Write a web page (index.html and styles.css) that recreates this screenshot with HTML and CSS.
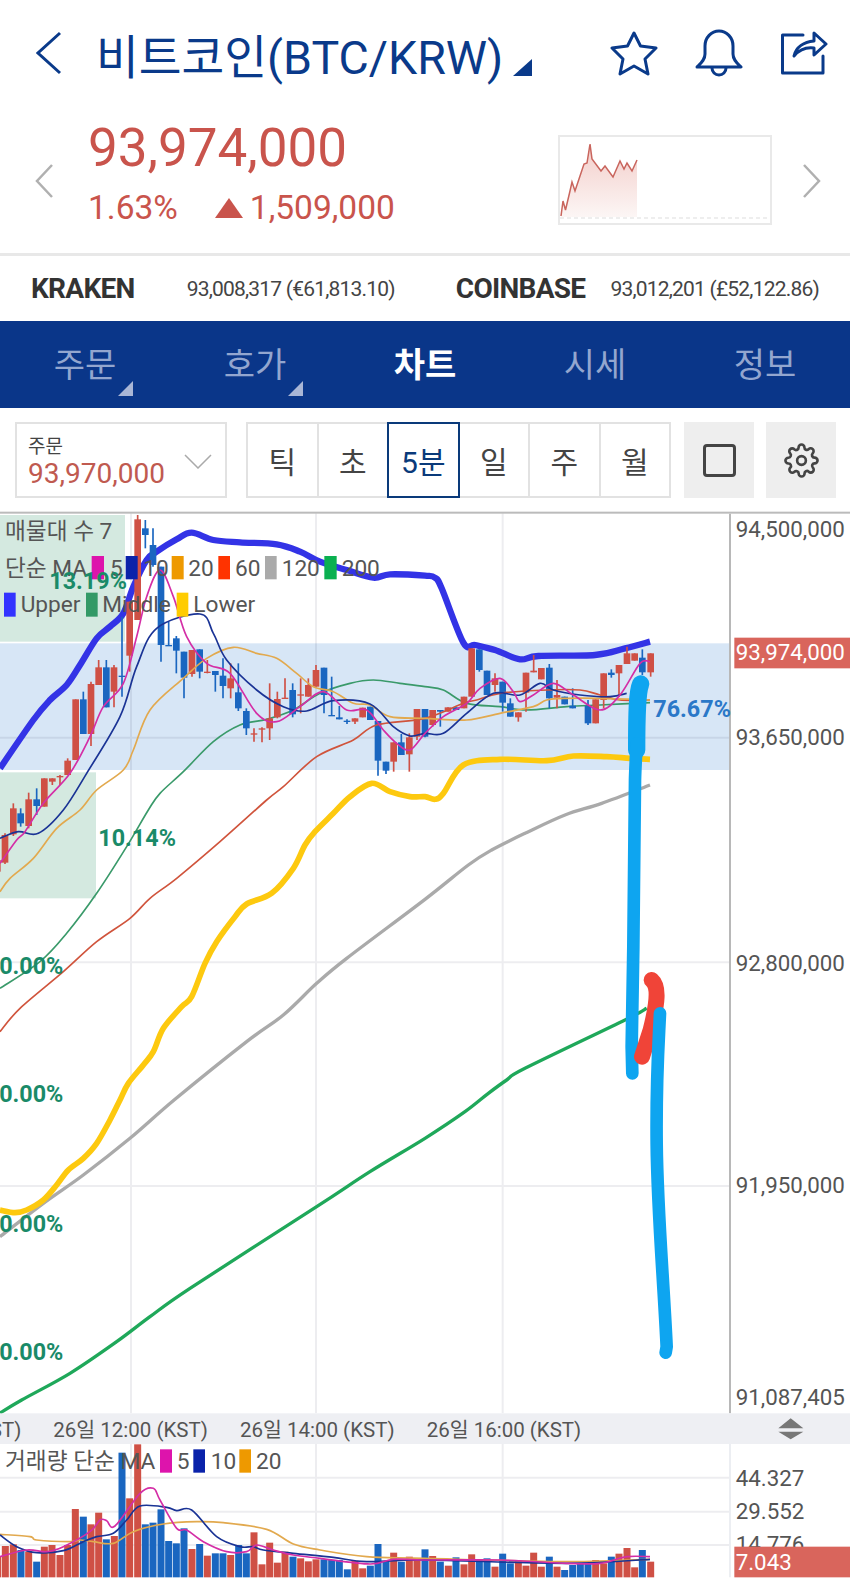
FILE: index.html
```html
<!DOCTYPE html>
<html lang="ko">
<head>
  <meta charset="UTF-8" />
  <meta name="viewport" content="width=device-width, initial-scale=1" />
  <title>비트코인(BTC/KRW)</title>
  <link rel="stylesheet" href="styles.css">
</head>
<body>
  <header class="title-bar">
    <svg class="icon-back" viewBox="0 0 26 44"><path d="M24 2 L2 22 L24 42" /></svg>
    <h1 class="title">비트코인(BTC/KRW)</h1>
    <span class="corner-title"></span>
    <svg class="icon icon-star" viewBox="0 0 48 46"><path d="M24 3 L30.5 16 L46 18 L35 29 L38 44 L24 36 L10 44 L13 29 L2 18 L17.5 16 Z" /></svg>
    <svg class="icon icon-bell" viewBox="0 0 48 48"><path d="M2 38 C6 34 10 31 10 25 V17 A14 15 0 0 1 38 17 V25 C38 31 42 34 46 38 Z" /><path d="M17 39 A7 7 0 0 0 31 39" /></svg>
    <svg class="icon icon-share" viewBox="0 0 47 44"><path d="M22 4 H1.5 V42 H42 V25" /><path d="M13 25 C15 16 23 11 33 10 V2 L45 13 L33 24 V17 C25 16 18 19 13 25 Z" /></svg>
  </header>

  <section class="price-row">
    <svg class="icon-step" viewBox="0 0 18 34"><path d="M17 1 L2 17 L17 33" /></svg>
    <div class="price-info">
      <div class="price-now">93,974,000</div>
      <div class="price-change">
        <span class="change-rate">1.63%</span>
        <span class="change-arrow"></span>
        <span>1,509,000</span>
      </div>
    </div>
    <div class="spark">
      <svg viewBox="0 0 210 85">
        <defs>
          <linearGradient id="sparkFill" x1="0" y1="0" x2="0" y2="1">
            <stop offset="0" stop-color="#f3cdc9" />
            <stop offset="1" stop-color="#fcf6f5" />
          </linearGradient>
        </defs>
        <path class="spark-area" d="M1 79 L3 64 L5.500 73 L10 54 L12 45 L15 54 L19 42 L24 27 L27 26 L30 7 L32 22 L41 34 L45 29 L53 40 L60 24 L64 32 L67 26 L72 34 L77 23 V80 H1 Z" />
        <path class="spark-line" d="M1 79 L3 64 L5.500 73 L10 54 L12 45 L15 54 L19 42 L24 27 L27 26 L30 7 L32 22 L41 34 L45 29 L53 40 L60 24 L64 32 L67 26 L72 34 L77 23" />
        <path class="spark-base" d="M0 81 H208" />
      </svg>
    </div>
    <svg class="icon-step icon-next" viewBox="0 0 18 34"><path d="M1 1 L16 17 L1 33" /></svg>
  </section>

  <section class="exchange-row">
    <span class="exchange-name name-kraken">KRAKEN</span>
    <span class="exchange-price price-kraken">93,008,317 (€61,813.10)</span>
    <span class="exchange-name name-coinbase">COINBASE</span>
    <span class="exchange-price price-coinbase">93,012,201 (£52,122.86)</span>
  </section>

  <nav class="tabs">
    <a class="tab has-menu">주문</a>
    <a class="tab has-menu">호가</a>
    <a class="tab active">차트</a>
    <a class="tab">시세</a>
    <a class="tab">정보</a>
  </nav>

  <section class="toolbar">
    <div class="order-select">
      <div>
        <div class="order-label">주문</div>
        <div class="order-price">93,970,000</div>
      </div>
      <svg class="icon-down" viewBox="0 0 28 15"><path d="M1 1 L14 14 L27 1" /></svg>
    </div>
    <div class="periods">
      <button class="period">틱</button>
      <button class="period">초</button>
      <button class="period selected">5분</button>
      <button class="period">일</button>
      <button class="period">주</button>
      <button class="period">월</button>
    </div>
    <button class="tool"><span class="tool-square"></span></button>
    <button class="tool">
      <svg class="icon-gear" viewBox="0 0 24 24">
        <circle cx="12" cy="12" r="3" />
        <path d="M19.4 15a1.65 1.65 0 0 0 .33 1.82l.06.06a2 2 0 0 1 0 2.83 2 2 0 0 1-2.83 0l-.06-.06a1.65 1.65 0 0 0-1.82-.33 1.65 1.65 0 0 0-1 1.51V21a2 2 0 0 1-2 2 2 2 0 0 1-2-2v-.09A1.65 1.65 0 0 0 9 19.4a1.65 1.65 0 0 0-1.82.33l-.06.06a2 2 0 0 1-2.83 0 2 2 0 0 1 0-2.83l.06-.06a1.65 1.65 0 0 0 .33-1.82 1.65 1.65 0 0 0-1.51-1H3a2 2 0 0 1-2-2 2 2 0 0 1 2-2h.09A1.65 1.65 0 0 0 4.6 9a1.65 1.65 0 0 0-.33-1.82l-.06-.06a2 2 0 0 1 0-2.83 2 2 0 0 1 2.83 0l.06.06a1.65 1.65 0 0 0 1.82.33H9a1.65 1.65 0 0 0 1-1.51V3a2 2 0 0 1 2-2 2 2 0 0 1 2 2v.09a1.65 1.65 0 0 0 1 1.51 1.65 1.65 0 0 0 1.82-.33l.06-.06a2 2 0 0 1 2.83 0 2 2 0 0 1 0 2.83l-.06.06a1.65 1.65 0 0 0-.33 1.82V9a1.65 1.65 0 0 0 1.51 1H21a2 2 0 0 1 2 2 2 2 0 0 1-2 2h-.09a1.65 1.65 0 0 0-1.51 1z" />
      </svg>
    </button>
  </section>

  <!-- chart is drawn in 3x units, 1px on screen = 3 units -->
  <svg class="chart" viewBox="0 0 2550 3216">
    <rect class="chart-top" x="0" y="5" width="2550" height="6" />
    <rect class="zone-green" x="0" y="15" width="375" height="380" />
    <rect class="zone-green" x="0" y="787" width="288" height="378" />
    <rect class="zone-blue" x="0" y="400" width="2190" height="380" />

    <path class="grid" d="M393 11 V2710 M948 11 V2710 M1508 11 V2710 M0 683 H2190 M0 1357 H2190 M0 2028 H2190" />
    <path class="grid" d="M393 2802 V3202 M948 2802 V3202 M1508 2802 V3202 M0 2903 H2190 M0 3005 H2190 M0 3105 H2190" />
    <path class="axis-line" d="M2190 11 V2710" />
    <path class="axis-line-light" d="M2190 2802 V3202" />

    <polyline class="ma-200" points="0,2709 65,2670 210,2590 350,2495 450,2420 570,2335 950,2090 1110,1985 1275,1885 1395,1805 1465,1750 1520,1710 1575,1675 1875,1530 1940,1495" />
    <polyline class="ma-120" points="0,2180 130,2080 250,1995 390,1885 525,1768 740,1595 850,1515 950,1420 1040,1345 1275,1168 1405,1065 1475,1020 1575,970 1695,915 1805,880 1950,825" />
    <polyline class="band-lower" points="0,2100 45,2108 80,2100 130,2070 170,2025 205,1980 250,1945 290,1900 330,1830 360,1770 385,1720 430,1665 460,1625 490,1555 545,1490 575,1460 615,1360 650,1295 705,1220 740,1182 815,1150 880,1075 915,1005 945,965 1000,910 1050,860 1115,820 1170,845 1230,860 1275,860 1305,868 1330,850 1390,765 1500,748 1640,752 1720,738 1820,740 1890,745 1950,748" />
    <polyline class="band-upper" points="0,775 100,630 150,570 200,525 240,465 290,385 330,350 370,310 400,230 440,150 470,125 530,88 575,68 640,90 720,97 830,103 900,125 960,155 1040,180 1120,203 1170,193 1275,197 1305,203 1325,235 1390,398 1425,405 1485,420 1560,448 1615,438 1785,435 1875,415 1950,395" />
    <polyline class="band-middle" points="0,1435 120,1355 200,1270 290,1150 380,1010 445,900 480,850 550,785 640,695 720,645 800,628 880,600 960,550 1050,520 1120,510 1200,520 1275,530 1330,540 1400,580 1500,590 1580,600 1700,590 1800,585 1950,578" />

    <g id="candles"></g>

    <polyline class="ma-60" points="0,1565 60,1495 190,1385 290,1295 390,1225 450,1165 530,1105 660,995 800,870 850,830 950,740 1060,690 1130,645 1275,625 1390,580 1430,570 1500,550 1640,540 1740,540 1800,555 1860,570 1950,570" />
    <polyline class="ma-20" points="0,1145 30,1105 100,1045 170,955 240,900 290,840 370,780 400,720 450,600 550,505 620,445 700,412 770,430 830,445 890,490 940,530 1000,545 1060,580 1110,585 1170,620 1275,625 1400,630 1500,610 1600,590 1640,570 1700,565 1800,565 1950,570" />
    <polyline class="ma-10" points="0,985 55,965 115,970 190,900 260,790 360,620 410,470 470,355 600,312 640,370 680,450 770,540 850,590 920,603 1000,572 1110,582 1180,650 1230,678 1275,670 1330,670 1400,610 1480,550 1560,555 1620,520 1660,540 1740,555 1830,560 1880,550" />
    <polyline class="ma-5" points="0,1060 50,990 75,965 130,880 210,790 270,680 310,590 370,520 410,380 440,260 480,180 520,260 560,380 620,460 690,490 770,610 830,635 900,590 970,545 1040,600 1100,600 1150,660 1190,700 1230,720 1275,670 1330,620 1400,580 1440,535 1500,505 1540,545 1560,575 1600,555 1660,520 1720,555 1800,600 1860,555 1920,460 1950,455" />

    <text class="legend" x="15" y="87">매물대 수 7</text>
    <text class="legend" x="15" y="198">단순 MA</text>
    <rect class="swatch-5" x="275" y="138" width="37" height="70" /><text class="legend" x="330" y="198">5</text>
    <rect class="swatch-10" x="377" y="138" width="36" height="70" /><text class="legend" x="430" y="198">10</text>
    <rect class="swatch-20" x="515" y="138" width="36" height="70" /><text class="legend" x="565" y="198">20</text>
    <rect class="swatch-60" x="655" y="138" width="35" height="70" /><text class="legend" x="705" y="198">60</text>
    <rect class="swatch-120" x="795" y="138" width="35" height="70" /><text class="legend" x="845" y="198">120</text>
    <rect class="swatch-200" x="973" y="138" width="37" height="70" /><text class="legend" x="1025" y="198">200</text>
    <rect class="swatch-upper" x="12" y="248" width="35" height="72" /><text class="legend" x="62" y="305">Upper</text>
    <rect class="swatch-middle" x="258" y="248" width="35" height="72" /><text class="legend" x="307" y="305">Middle</text>
    <rect class="swatch-lower" x="530" y="248" width="35" height="72" /><text class="legend" x="580" y="305">Lower</text>

    <text class="zone-pct" x="148" y="238">13.19%</text>
    <text class="zone-pct" x="295" y="1007">10.14%</text>
    <text class="zone-pct" x="190" y="1392" text-anchor="end">0.00%</text>
    <text class="zone-pct" x="190" y="1777" text-anchor="end">0.00%</text>
    <text class="zone-pct" x="190" y="2165" text-anchor="end">0.00%</text>
    <text class="zone-pct" x="190" y="2550" text-anchor="end">0.00%</text>
    <text class="zone-pct zone-pct-blue" x="1960" y="622">76.67%</text>

    <text class="axis-label" x="2207" y="80">94,500,000</text>
    <rect class="price-tag" x="2203" y="383" width="347" height="92" />
    <text class="axis-label tag-label" x="2207" y="450">93,974,000</text>
    <text class="axis-label" x="2207" y="705">93,650,000</text>
    <text class="axis-label" x="2207" y="1382">92,800,000</text>
    <text class="axis-label" x="2207" y="2050">91,950,000</text>
    <text class="axis-label" x="2207" y="2685">91,087,405</text>

    <g id="volume"></g>
    <polyline class="ma-20" points="0,3073 90,3080 110,3090 210,3095 240,3090 280,3095 340,3100 400,3065 490,3042 590,3035 670,3038 800,3058 880,3102 960,3120 1100,3140 1275,3145 1700,3155 1950,3148" />
    <polyline class="ma-10" points="0,3075 50,3110 110,3128 190,3122 250,3095 290,3080 340,3070 380,3030 420,2988 500,2992 530,3002 575,3000 650,3080 720,3110 760,3110 790,3120 880,3130 1000,3142 1100,3155 1275,3150 1700,3160 1950,3148" />
    <polyline class="ma-5" points="0,3140 80,3120 140,3125 190,3110 270,3065 300,3030 320,3032 345,3048 420,2950 460,2935 480,2970 530,3055 560,3060 610,3095 680,3125 740,3125 770,3105 820,3120 880,3135 960,3145 1110,3162 1180,3148 1275,3150 1500,3150 1700,3160 1800,3160 1880,3140 1950,3140" />

    <rect class="time-bar" x="0" y="2710" width="2550" height="92" />
    <text class="time-label" x="64" y="2780" text-anchor="end">(KST)</text>
    <text class="time-label" x="160" y="2780">26일 12:00 (KST)</text>
    <text class="time-label" x="720" y="2780">26일 14:00 (KST)</text>
    <text class="time-label" x="1280" y="2780">26일 16:00 (KST)</text>
    <path class="resize" d="M2372 2725 L2410 2755 H2335 Z M2335 2765 H2410 L2372 2788 Z" />

    <text class="legend" x="15" y="2878">거래량 단순 MA</text>
    <rect class="swatch-5" x="480" y="2818" width="36" height="70" /><text class="legend" x="530" y="2878">5</text>
    <rect class="swatch-10" x="580" y="2818" width="35" height="70" /><text class="legend" x="632" y="2878">10</text>
    <rect class="swatch-20" x="718" y="2818" width="35" height="70" /><text class="legend" x="768" y="2878">20</text>

    <text class="axis-label" x="2207" y="2928">44.327</text>
    <text class="axis-label" x="2207" y="3028">29.552</text>
    <text class="axis-label" x="2207" y="3127">14.776</text>
    <rect class="price-tag" x="2203" y="3110" width="347" height="92" />
    <text class="axis-label tag-label" x="2207" y="3180">7.043</text>

    <!-- marker scribbles on top of the screenshot -->
    <path class="scribble-head" d="M1922 522 C1912 545 1910 600 1910 720" />
    <path class="scribble-blue" d="M1910 700 C1908 740 1906 770 1905 810 L1900 1310 L1895 1610 L1897 1690" />
    <path class="scribble-red" d="M1955 1410 C1978 1430 1972 1480 1952 1560 L1926 1640" />
    <path class="scribble-blue" d="M1980 1510 C1976 1600 1968 1700 1970 1900 C1972 2100 1990 2300 2000 2510 L1997 2528" />
  </svg>

  <script src="chart.js"></script>
</body>
</html>
```

FILE: styles.css
```css
* {
  box-sizing: border-box;
}

body {
  width: 850px;
  height: 1582px;
  margin: 0;
  overflow: hidden;
  background: #fff;
  font-family: Roboto, "Noto Sans CJK KR", sans-serif;
  color: #333;
}

/* title */
.title-bar {
  display: flex;
  align-items: center;
  height: 106px;
  padding: 0 22px 0 36px;
}

.icon-back {
  width: 26px;
  height: 44px;
  fill: none;
  stroke: #0a3a8a;
  stroke-width: 3;
}

.title {
  margin: 0 0 0 34px;
  font-size: 46.5px;
  font-weight: 400;
  color: #0a3a8a;
  white-space: nowrap;
}

.corner-title {
  width: 0;
  height: 0;
  margin: 28px 0 0 10px;
  border-left: 19px solid transparent;
  border-bottom: 17px solid #0a3a8a;
}

.icon {
  height: 46px;
  fill: none;
  stroke: #0a3a8a;
  stroke-width: 3;
  stroke-linejoin: round;
  stroke-linecap: round;
}

.icon-star {
  width: 48px;
  margin-left: auto;
}

.icon-bell {
  width: 48px;
  height: 48px;
  margin-left: 37px;
}

.icon-share {
  width: 47px;
  margin-left: 38px;
}

/* price */
.price-row {
  display: flex;
  align-items: center;
  height: 150px;
  padding: 0 29px 0 35px;
  border-bottom: 3px solid #e8e8e8;
}

.icon-step {
  flex: none;
  width: 18px;
  height: 34px;
  margin-top: 2px;
  fill: none;
  stroke: #b0b0b0;
  stroke-width: 2.5;
}

.icon-next {
  margin-left: 31px;
}

.price-info {
  flex: 1;
  margin: 0 0 16px 35px;
  color: #c9544c;
}

.price-now {
  font-size: 53px;
  line-height: 62px;
}

.price-change {
  display: flex;
  align-items: center;
  margin-top: 10px;
  font-size: 33.5px;
  line-height: 38px;
}

.change-rate {
  margin-right: 37px;
}

.change-arrow {
  width: 0;
  height: 0;
  margin-right: 7px;
  border-left: 14px solid transparent;
  border-right: 14px solid transparent;
  border-bottom: 20px solid #c9544c;
}

.spark {
  flex: none;
  width: 214px;
  height: 90px;
  border: 2px solid #e9e9e9;
}

.spark svg {
  display: block;
  width: 210px;
  height: 85px;
}

.spark-area {
  fill: url(#sparkFill);
}

.spark-line {
  fill: none;
  stroke: #c9655d;
  stroke-width: 1.5;
}

.spark-base {
  fill: none;
  stroke: #ddd;
  stroke-dasharray: 4 3;
}

/* exchanges */
.exchange-row {
  display: flex;
  align-items: center;
  height: 65px;
  padding: 0 0 0 31px;
  white-space: nowrap;
}

.exchange-name {
  font-size: 28px;
  font-weight: 700;
  letter-spacing: -0.7px;
  color: #333;
}

.exchange-price {
  font-size: 21px;
  letter-spacing: -0.8px;
  color: #444;
}

.price-kraken {
  margin-left: 52px;
}

.name-coinbase {
  margin-left: 61px;
}

.price-coinbase {
  margin-left: 25px;
}

/* tabs */
.tabs {
  display: flex;
  height: 87px;
  background: #0a3689;
}

.tab {
  position: relative;
  flex: 1;
  font-size: 34px;
  line-height: 88px;
  text-align: center;
  color: #93a6cf;
}

.tab.active {
  font-weight: 700;
  color: #fff;
}

.tab.has-menu::after {
  content: "";
  position: absolute;
  left: 118px;
  bottom: 12px;
  border-left: 15px solid transparent;
  border-bottom: 15px solid #a9b6d6;
}

/* toolbar */
.toolbar {
  display: flex;
  align-items: flex-start;
  height: 102px;
  padding: 14px 0 0 15px;
}

.order-select {
  display: flex;
  flex: none;
  justify-content: space-between;
  width: 212px;
  height: 76px;
  padding: 11px 13px 0 11px;
  border: 2px solid #e2e2e2;
}

.order-label {
  font-size: 19px;
  line-height: 24px;
  color: #444;
}

.order-price {
  font-size: 28px;
  line-height: 30px;
  color: #c05a50;
}

.icon-down {
  width: 28px;
  height: 15px;
  margin-top: 19px;
  fill: none;
  stroke: #aaa;
  stroke-width: 1.5;
}

.periods {
  display: flex;
  flex: none;
  width: 425px;
  height: 76px;
  margin: 0 13px 0 19px;
  border: 2px solid #e2e2e2;
}

.period {
  flex: 1;
  padding: 0;
  border: none;
  border-right: 2px solid #e2e2e2;
  background: #fff;
  font-family: inherit;
  font-size: 30px;
  color: #444;
}

.period:last-child {
  border-right: none;
}

.period.selected {
  margin: -2px 0 -2px -2px;
  border: 2px solid #0a3a7a;
  color: #0a3a7a;
}

.tool {
  display: flex;
  flex: none;
  align-items: center;
  justify-content: center;
  width: 70px;
  height: 76px;
  margin-right: 12px;
  padding: 0;
  border: none;
  background: #eee;
}

.tool-square {
  width: 33px;
  height: 33px;
  border: 3px solid #444;
  border-radius: 4px;
}

.icon-gear {
  width: 35px;
  height: 35px;
  fill: none;
  stroke: #444;
  stroke-width: 1.8;
}

/* chart */
.chart {
  display: block;
  width: 850px;
  height: 1072px;
}

.chart polyline,
.chart path {
  fill: none;
  stroke-linejoin: round;
}

.chart-top {
  fill: #bbb;
}

.zone-green {
  fill: #d4e9e0;
}

.zone-blue {
  fill: #d7e6f6;
}

.grid {
  stroke: rgba(0, 0, 40, 0.07);
  stroke-width: 6;
}

.axis-line {
  stroke: #b8b8b8;
  stroke-width: 6;
}

.axis-line-light {
  stroke: #eceef2;
  stroke-width: 6;
}

.band-upper {
  stroke: #3333e6;
  stroke-width: 19;
}

.band-lower {
  stroke: #fdc90f;
  stroke-width: 17;
}

.band-middle {
  stroke: #3a9a6a;
  stroke-width: 5;
}

.ma-5 {
  stroke: #d42ea6;
  stroke-width: 5;
}

.ma-10 {
  stroke: #1a3395;
  stroke-width: 5;
}

.ma-20 {
  stroke: #e2a94e;
  stroke-width: 5;
}

.ma-60 {
  stroke: #d0543c;
  stroke-width: 5;
}

.ma-120 {
  stroke: #aaa;
  stroke-width: 10;
}

.ma-200 {
  stroke: #1fa85a;
  stroke-width: 10;
}

.candle-up {
  fill: #cf5045;
  stroke: #cf5045;
}

.candle-down {
  fill: #1a66c0;
  stroke: #1a66c0;
}

.swatch-5 { fill: #dd14ac; }
.swatch-10 { fill: #0a22aa; }
.swatch-20 { fill: #ee9900; }
.swatch-60 { fill: #ff3300; }
.swatch-120 { fill: #aaa; }
.swatch-200 { fill: #0ab050; }
.swatch-upper { fill: #3333ff; }
.swatch-middle { fill: #339966; }
.swatch-lower { fill: #ffcc00; }

.legend {
  font-size: 68px;
  fill: #555;
}

.zone-pct {
  font-size: 70px;
  font-weight: 700;
  fill: #1a8a68;
}

.zone-pct-blue {
  fill: #2a78c8;
}

.axis-label {
  font-size: 67px;
  fill: #555;
}

.tag-label {
  fill: #fff;
}

.price-tag {
  fill: #d9655c;
}

.time-bar {
  fill: #eeeff3;
}

.time-label {
  font-size: 61.5px;
  fill: #555;
}

.chart .resize {
  fill: #777;
}

.scribble-blue {
  stroke: #0ea5f0;
  stroke-width: 38;
  stroke-linecap: round;
}

.scribble-head {
  stroke: #0ea5f0;
  stroke-width: 52;
  stroke-linecap: round;
}

.scribble-red {
  stroke: #f04438;
  stroke-width: 48;
  stroke-linecap: round;
}
```

FILE: chart.js
```js
const SVG_NS = "http://www.w3.org/2000/svg";

// x, wick top, body top, body bottom, wick bottom, "r" up / "b" down
const candles = [
  [-8, 1050, 1050, 1085, 1090, "r"], [15, 970, 975, 1058, 1062, "r"], [40, 880, 895, 973, 978, "r"],
  [62, 895, 910, 940, 950, "b"], [86, 848, 868, 948, 955, "r"], [110, 835, 868, 888, 915, "b"],
  [133, 805, 805, 890, 890, "r"], [157, 805, 805, 815, 825, "r"], [180, 795, 798, 802, 825, "r"],
  [203, 745, 752, 795, 795, "r"], [227, 568, 568, 750, 750, "r"], [250, 545, 568, 672, 672, "b"],
  [273, 515, 522, 672, 708, "r"], [296, 450, 472, 525, 525, "r"], [319, 450, 472, 592, 592, "b"],
  [342, 465, 472, 545, 592, "r"], [366, 320, 497, 501, 560, "b"], [389, 275, 275, 437, 485, "r"],
  [413, 15, 28, 330, 330, "r"], [436, 30, 55, 75, 115, "b"], [459, 55, 105, 165, 170, "b"],
  [483, 170, 170, 405, 455, "b"], [506, 335, 405, 408, 408, "b"], [529, 378, 385, 422, 490, "b"],
  [552, 425, 425, 503, 565, "b"], [576, 420, 420, 492, 500, "r"], [599, 418, 418, 485, 505, "b"],
  [622, 450, 485, 488, 490, "r"], [646, 483, 483, 495, 545, "b"], [669, 445, 497, 528, 565, "b"],
  [692, 460, 505, 535, 565, "r"], [715, 460, 547, 595, 603, "b"], [739, 595, 603, 655, 675, "b"],
  [762, 655, 670, 672, 695, "r"], [786, 652, 655, 657, 697, "r"], [809, 520, 625, 655, 690, "r"],
  [832, 545, 567, 622, 625, "r"], [855, 505, 563, 566, 566, "r"], [878, 520, 540, 613, 622, "b"],
  [902, 505, 553, 557, 610, "r"], [925, 505, 525, 560, 560, "r"], [948, 465, 480, 530, 530, "r"],
  [972, 473, 473, 555, 610, "b"], [995, 500, 615, 618, 618, "b"], [1018, 588, 622, 628, 628, "b"],
  [1041, 628, 632, 634, 642, "b"], [1065, 625, 625, 635, 642, "r"], [1088, 593, 593, 622, 622, "r"],
  [1111, 590, 590, 630, 630, "b"], [1134, 633, 633, 752, 797, "b"], [1158, 755, 755, 782, 792, "b"],
  [1181, 697, 697, 755, 785, "r"], [1204, 672, 697, 735, 735, "b"], [1228, 670, 682, 733, 785, "r"],
  [1251, 597, 597, 680, 690, "r"], [1275, 597, 597, 680, 682, "b"], [1298, 600, 600, 645, 650, "r"],
  [1321, 600, 600, 605, 650, "b"], [1344, 592, 592, 605, 605, "r"], [1368, 592, 592, 600, 600, "b"],
  [1392, 560, 560, 595, 595, "r"], [1415, 415, 415, 560, 560, "r"], [1438, 418, 418, 480, 485, "b"],
  [1461, 482, 482, 555, 555, "b"], [1485, 490, 505, 525, 545, "r"], [1508, 515, 515, 578, 605, "b"],
  [1531, 565, 580, 620, 620, "b"], [1555, 607, 607, 622, 635, "r"], [1578, 488, 488, 548, 605, "r"],
  [1601, 435, 482, 487, 487, "r"], [1624, 474, 474, 508, 508, "r"], [1648, 462, 473, 565, 595, "b"],
  [1671, 510, 555, 563, 595, "r"], [1694, 560, 560, 583, 583, "b"], [1718, 535, 587, 595, 595, "b"],
  [1764, 570, 587, 640, 645, "b"], [1787, 568, 568, 640, 640, "r"], [1811, 490, 490, 570, 595, "r"],
  [1834, 478, 488, 495, 503, "b"], [1857, 465, 465, 490, 560, "r"], [1881, 410, 430, 462, 462, "r"],
  [1904, 430, 430, 452, 452, "r"], [1927, 418, 443, 487, 495, "b"], [1952, 430, 430, 487, 500, "r"],
];

// x, bar top, "r" / "b"; bars all stand on y = 3202
const bars = [
  [-7, 3140, "r"], [16, 3108, "r"], [40, 3103, "r"], [63, 3120, "b"], [86, 3125, "r"], [110, 3155, "b"],
  [133, 3110, "r"], [156, 3105, "r"], [180, 3135, "r"], [203, 3105, "r"], [226, 2997, "r"], [250, 3020, "b"],
  [273, 3043, "r"], [296, 3008, "r"], [319, 3088, "b"], [343, 3078, "r"], [366, 2828, "b"], [389, 2965, "r"],
  [413, 2803, "r"], [436, 3043, "b"], [459, 3038, "b"], [483, 2998, "b"], [506, 3093, "b"], [529, 3100, "b"],
  [552, 3055, "b"], [576, 3117, "r"], [599, 3102, "b"], [622, 3137, "r"], [646, 3130, "b"], [669, 3130, "b"],
  [692, 3135, "r"], [716, 3105, "b"], [739, 3130, "b"], [762, 3067, "r"], [786, 3163, "r"], [809, 3098, "r"],
  [832, 3158, "r"], [855, 3125, "r"], [879, 3140, "b"], [902, 3145, "r"], [925, 3154, "r"], [948, 3148, "r"],
  [972, 3148, "b"], [995, 3150, "b"], [1018, 3150, "b"], [1042, 3178, "b"], [1065, 3152, "r"], [1088, 3175, "r"],
  [1111, 3167, "b"], [1134, 3102, "b"], [1158, 3153, "b"], [1181, 3128, "r"], [1204, 3155, "b"], [1228, 3140, "r"],
  [1251, 3150, "r"], [1275, 3118, "b"], [1298, 3138, "r"], [1321, 3155, "b"], [1345, 3167, "r"], [1368, 3142, "b"],
  [1392, 3163, "r"], [1415, 3133, "r"], [1438, 3147, "b"], [1461, 3145, "b"], [1485, 3170, "r"], [1508, 3131, "b"],
  [1531, 3160, "b"], [1555, 3150, "r"], [1578, 3167, "r"], [1601, 3128, "r"], [1624, 3170, "r"], [1648, 3140, "b"],
  [1671, 3170, "r"], [1694, 3180, "b"], [1718, 3165, "b"], [1741, 3160, "b"], [1764, 3160, "b"], [1787, 3150, "r"],
  [1811, 3160, "r"], [1834, 3140, "b"], [1857, 3131, "r"], [1881, 3114, "r"], [1904, 3172, "r"], [1927, 3120, "b"],
  [1952, 3155, "r"],
];

function addShape(parent, tag, attrs) {
  const el = document.createElementNS(SVG_NS, tag);
  for (const key in attrs) {
    el.setAttribute(key, attrs[key]);
  }
  parent.appendChild(el);
}

const candleGroup = document.getElementById("candles");
candles.forEach(([x, wickTop, top, bottom, wickBottom, dir]) => {
  const cls = dir === "r" ? "candle-up" : "candle-down";
  addShape(candleGroup, "line", { class: cls, x1: x, x2: x, y1: wickTop, y2: wickBottom, "stroke-width": 5 });
  addShape(candleGroup, "rect", { class: cls, x: x - 10, y: top, width: 20, height: Math.max(bottom - top, 4), "stroke-width": 0 });
});

const volumeGroup = document.getElementById("volume");
bars.forEach(([x, top, dir]) => {
  const cls = dir === "r" ? "candle-up" : "candle-down";
  addShape(volumeGroup, "rect", { class: cls, x: x - 10.5, y: top, width: 21, height: 3202 - top, "stroke-width": 0 });
});

// turn the polylines into smooth curves (catmull-rom to bezier)
document.querySelectorAll(".chart polyline").forEach((line) => {
  const pts = line.getAttribute("points").split(" ").map((p) => p.split(",").map(Number));
  let d = `M${pts[0][0]} ${pts[0][1]}`;
  for (let i = 0; i < pts.length - 1; i++) {
    const p0 = pts[i - 1] || pts[i];
    const p1 = pts[i];
    const p2 = pts[i + 1];
    const p3 = pts[i + 2] || p2;
    const c1 = [p1[0] + (p2[0] - p0[0]) / 6, p1[1] + (p2[1] - p0[1]) / 6];
    const c2 = [p2[0] - (p3[0] - p1[0]) / 6, p2[1] - (p3[1] - p1[1]) / 6];
    d += ` C${c1[0]} ${c1[1]} ${c2[0]} ${c2[1]} ${p2[0]} ${p2[1]}`;
  }
  const path = document.createElementNS(SVG_NS, "path");
  path.setAttribute("class", line.getAttribute("class"));
  path.setAttribute("d", d);
  line.replaceWith(path);
});
```
